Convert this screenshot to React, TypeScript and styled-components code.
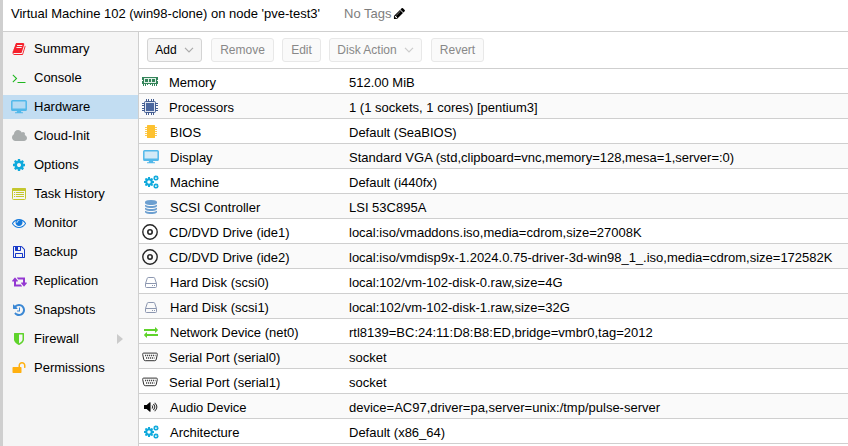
import React from "react";
import styled, { createGlobalStyle } from "styled-components";

const GlobalStyle = createGlobalStyle`
  * { box-sizing: border-box; }
  html, body { margin: 0; padding: 0; overflow: hidden; }
  body {
    background: #fff;
    color: #000;
    font-family: "Liberation Sans", Arial, Helvetica, sans-serif;
    font-size: 13px;
  }
`;

const Window = styled.div`
  display: flex;
  flex-direction: column;
  width: 848px;
  height: 446px;
  overflow: hidden;
  background: #fff;
  border-left: 3px solid #cfcfcf;
  white-space: nowrap;
`;

const Header = styled.header`
  display: flex;
  align-items: center;
  flex: none;
  height: 32px;
  padding: 0 0 4px 8px;
  border-bottom: 1px solid #cfcfcf;
`;

const Title = styled.span`
  width: 333px;
`;

const Tags = styled.span`
  display: flex;
  align-items: center;
  gap: 2px;
  color: #7d7d7d;
`;

const Body = styled.div`
  display: flex;
  flex: 1;
  min-height: 0;
`;

const Sidebar = styled.nav`
  display: flex;
  flex-direction: column;
  flex: none;
  gap: 5px;
  width: 136px;
  padding-top: 5px;
  background: #f5f5f5;
  border-right: 1px solid #cfcfcf;
`;

const NavItem = styled.div<{ $active?: boolean }>`
  display: flex;
  align-items: center;
  flex: none;
  height: 24px;
  margin-top: 0;
  padding: 0 15px 1px 6px;
  background: ${(p) => (p.$active ? "#c2ddf2" : "transparent")};
`;

const NavIcon = styled.span`
  display: flex;
  justify-content: center;
  width: 20px;
  margin-right: 5px;
  padding-top: 1px;
`;

const NavText = styled.span`
  flex: 1;
`;

const Content = styled.main`
  display: flex;
  flex-direction: column;
  flex: 1;
  min-width: 0;
`;

const Toolbar = styled.div`
  display: flex;
  flex: none;
  height: 37px;
  padding: 6px 8px;
  border-bottom: 1px solid #cfcfcf;
`;

const Button = styled.button<{ $width: number; $gap: number; $off?: boolean }>`
  display: flex;
  align-items: center;
  justify-content: center;
  flex: none;
  gap: 7px;
  width: ${(p) => p.$width}px;
  height: 24px;
  margin: 0 ${(p) => p.$gap}px 0 0;
  padding: 0;
  font-family: inherit;
  font-size: 12px;
  color: ${(p) => (p.$off ? "#888" : "#000")};
  background: ${(p) => (p.$off ? "#fafafa" : "#f5f5f5")};
  border: 1px solid ${(p) => (p.$off ? "#e8e8e8" : "#d4d4d4")};
  border-radius: 3px;
`;

const Grid = styled.div`
  display: flex;
  flex-direction: column;
`;

const Row = styled.div`
  display: flex;
  align-items: center;
  flex: none;
  height: 25px;
  padding-top: 2px;
  border-bottom: 1px solid #cfcfcf;
  &:nth-child(even) { background: #fafafa; }
`;

const RowIcon = styled.span<{ $wide?: boolean }>`
  display: flex;
  justify-content: center;
  width: 24px;
  padding-right: ${(p) => (p.$wide ? 2 : 0)}px;
`;

const Label = styled.span<{ $wide?: boolean }>`
  width: 186px;
  padding-left: ${(p) => (p.$wide ? 6 : 7)}px;
`;

const Value = styled.span`
  flex: 1;
`;

const paths = {
  book: "M1703 478q40 57 18 129l-275 906q-19 64-76.500 107.500t-122.500 43.500h-923q-77 0-148.500-53.500t-99.500-131.500q-24-67-2-127 0-4 3-27t4-37q1-8-3-21.500t-3-19.500q2-11 8-21t16.500-23.500 16.500-23.500q23-38 45-91.500t30-91.500q3-10 .5-30t-.5-28q3-11 17-28t17-23q21-36 42-92t25-90q1-9-2.500-32t.5-28q4-13 22-30.500t22-22.500q19-26 42.500-84.500t27.500-96.500q1-8-3-25.500t-2-26.500q2-8 9-18t18-23 17-21q8-12 16.500-30.500t15-35 16-36 19.500-32 26.500-23.500 36-11.500 47.500 5.500l-1 3q38-9 51-9h761q74 0 114 56t18 130l-274 906q-36 119-71.500 153.500t-128.500 34.500h-869q-27 0-38 15-11 16-1 43 24 70 144 70h923q29 0 56-15.500t35-41.500l300-987q7-22 5-57 38 15 59 43zm-1064 2q-4 13 2 22.500t20 9.500h608q13 0 25.500-9.500t16.500-22.500l21-64q4-13-2-22.500t-20-9.500h-608q-13 0-25.500 9.500t-16.500 22.500zm-83 256q-4 13 2 22.500t20 9.500h608q13 0 25.500-9.500t16.500-22.500l21-64q4-13-2-22.500t-20-9.500h-608q-13 0-25.500 9.500t-16.500 22.500z",
  terminal: "M649 983l-466 466q-10 10-23 10t-23-10l-50-50q-10-10-10-23t10-23l393-393-393-393q-10-10-10-23t10-23l50-50q10-10 23-10t23 10l466 466q10 10 10 23t-10 23zm1079 457v64q0 14-9 23t-23 9h-960q-14 0-23-9t-9-23v-64q0-14 9-23t23-9h960q14 0 23 9t9 23z",
  cloud: "M1984 1152q0 159-112.500 271.500t-271.500 112.500h-1088q-185 0-316.500-131.500t-131.500-316.500q0-132 71-241.500t187-163.500q-2-28-2-43 0-212 150-362t362-150q158 0 286.500 88t187.500 230q70-62 166-62 106 0 181 75t75 181q0 75-41 138 129 30 213 134.500t84 239.500z",
  gear: "M1152 896q0-106-75-181t-181-75-181 75-75 181 75 181 181 75 181-75 75-181zm512-109v222q0 12-8 23t-20 13l-185 28q-19 54-39 91 35 50 107 138 10 12 10 25t-9 23q-27 37-99 108t-94 71q-12 0-26-9l-138-108q-44 23-91 38-16 136-29 186-7 28-36 28h-222q-14 0-24.500-8.500t-11.500-21.500l-28-184q-49-16-90-37l-141 107q-10 9-25 9-14 0-25-11-126-114-165-168-7-10-7-23 0-12 8-23 15-21 51-66.500t54-70.500q-27-50-41-99l-183-27q-13-2-21-12.500t-8-23.500v-222q0-12 8-23t19-13l186-28q14-46 39-92-40-57-107-138-10-12-10-24 0-10 9-23 26-36 98.500-107.500t94.500-71.500q13 0 26 10l138 107q44-23 91-38 16-136 29-186 7-28 36-28h222q14 0 24.500 8.500t11.500 21.500l28 184q49 16 90 37l142-107q9-9 24-9 13 0 25 10 129 119 165 170 7 8 7 22 0 12-8 23-15 21-51 66.500t-54 70.500q26 50 41 98l183 28q13 2 21 12.500t8 23.500z",
  eye: "M1664 960q-152-236-381-353 61 104 61 225 0 185-131.500 316.500t-316.500 131.500-316.500-131.500-131.500-316.500q0-121 61-225-229 117-381 353 133 205 333.500 326.500t434.500 121.500 434.500-121.500 333.500-326.500zm-720-384q0-20-14-34t-34-14q-125 0-214.500 89.500t-89.500 214.500q0 20 14 34t34 14 34-14 14-34q0-86 61-147t147-61q20 0 34-14t14-34zm848 384q0 34-20 69-140 230-376.500 368.500t-499.500 138.500-499.500-139-376.500-368q-20-35-20-69t20-69q140-229 376.500-368t499.500-139 499.500 139 376.500 368q20 35 20 69z",
  floppy: "M512 1536h768v-384h-768v384zm896 0h128v-896q0-14-10-38.500t-20-34.500l-281-281q-10-10-34-20t-39-10v416q0 40-28 68t-68 28h-576q-40 0-68-28t-28-68v-416h-128v1280h128v-416q0-40 28-68t68-28h832q40 0 68 28t28 68v416zm-384-928v-320q0-13-9.500-22.500t-22.500-9.500h-192q-13 0-22.500 9.500t-9.500 22.500v320q0 13 9.500 22.500t22.500 9.500h192q13 0 22.500-9.500t9.500-22.500zm640 32v928q0 40-28 68t-68 28h-1344q-40 0-68-28t-28-68v-1344q0-40 28-68t68-28h928q40 0 88 20t76 48l280 280q28 28 48 76t20 88z",
  retweet: "M1216 1568q0 13-9.500 22.500t-22.500 9.500h-960q-8 0-13.500-2t-9-7-5.500-8-3-11.500-1-11.500v-600h-192q-26 0-45-19t-19-45q0-24 15-41l320-384q19-22 49-22t49 22l320 384q15 17 15 41 0 26-19 45t-45 19h-192v384h576q16 0 25 11l160 192q7 10 7 21zm640-416q0 24-15 41l-320 384q-20 23-49 23t-49-23l-320-384q-15-17-15-41 0-26 19-45t45-19h192v-384h-576q-16 0-25-12l-160-192q-7-9-7-20 0-13 9.500-22.500t22.500-9.500h960q8 0 13.500 2t9 7 5.500 8 3 11.500 1 11.500v600h192q26 0 45 19t19 45z",
  history: "M1664 896q0 156-61 298t-164 245-245 164-298 61q-172 0-327-72.500t-264-204.500q-7-10-6.500-22.500t8.500-20.500l137-138q10-9 25-9 16 2 23 12 73 95 179 147t225 52q104 0 198.500-40.500t163.500-109.500 109.500-163.500 40.500-198.500-40.500-198.500-109.500-163.500-163.500-109.500-198.500-40.500q-98 0-188 35.500t-160 101.500l137 138q31 30 14 69-17 40-59 40h-448q-26 0-45-19t-19-45v-448q0-42 40-59 39-17 69 14l130 129q107-101 244.500-156.500t284.500-55.500q156 0 298 61t245 164 164 245 61 298zm-640-288v448q0 14-9 23t-23 9h-320q-14 0-23-9t-9-23v-64q0-14 9-23t23-9h224v-352q0-14 9-23t23-9h64q14 0 23 9t9 23z",
  shield: "M1344 960v-640h-448v1137q119-63 213-137 235-184 235-360zm192-768v768q0 86-33.500 170.500t-83 150-118 127.500-126.500 103-121 77.500-89.500 49.500-42.500 20q-12 6-26 6t-26-6q-16-7-42.500-20t-89.500-49.500-121-77.500-126.500-103-118-127.500-83-150-33.500-170.500v-768q0-26 19-45t45-19h1152q26 0 45 19t19 45z",
  unlock: "M1728 576v256q0 26-19 45t-45 19h-64q-26 0-45-19t-19-45v-256q0-106-75-181t-181-75-181 75-75 181v192h96q40 0 68 28t28 68v576q0 40-28 68t-68 28h-960q-40 0-68-28t-28-68v-576q0-40 28-68t68-28h672v-192q0-185 131.500-316.500t316.500-131.500 316.500 131.500 131.500 316.500z",
  database: "M896 768q237 0 443-43t325-127v170q0 69-103 128t-280 93.500-385 34.500-385-34.500-280-93.500-103-128v-170q119 84 325 127t443 43zm0 768q237 0 443-43t325-127v170q0 69-103 128t-280 93.500-385 34.500-385-34.500-280-93.500-103-128v-170q119 84 325 127t443 43zm0-384q237 0 443-43t325-127v170q0 69-103 128t-280 93.500-385 34.500-385-34.500-280-93.500-103-128v-170q119 84 325 127t443 43zm0-1152q208 0 385 34.500t280 93.500 103 128v128q0 69-103 128t-280 93.500-385 34.500-385-34.500-280-93.500-103-128v-128q0-69 103-128t280-93.500 385-34.500z",
  exchange: "M1792 1184v192q0 13-9.500 22.500t-22.500 9.500h-1376v192q0 13-9.500 22.500t-22.500 9.500q-12 0-24-10l-319-320q-9-9-9-22 0-14 9-23l320-320q9-9 23-9 13 0 22.500 9.500t9.500 22.500v192h1376q13 0 22.500 9.500t9.500 22.500zm0-544q0 14-9 23l-320 320q-9 9-23 9-13 0-22.500-9.500t-9.500-22.500v-192h-1376q-13 0-22.500-9.500t-9.500-22.500v-192q0-13 9.500-22.500t22.500-9.500h1376v-192q0-14 9-23t23-9q12 0 24 10l319 319q9 9 9 23z",
  pencil: "M491 1536l91-91-235-235-91 91v107h128v128h107zm523-928q0-22-22-22-10 0-17 7l-542 542q-7 7-7 17 0 22 22 22 10 0 17-7l542-542q7-7 7-17zm-54-192l416 416-832 832h-416v-416zm683 96q0 53-37 90l-166 166-416-416 166-165q36-38 90-38 53 0 91 38l235 234q37 39 37 91z",
};

type Glyph = { name: keyof typeof paths; color: string; box?: string; w?: number; h?: number };

const Icon = ({ name, color, box = "0 0 1792 1792", w = 14, h = 14 }: Glyph) => (
  <svg width={w} height={h} viewBox={box} fill={color}>
    <path d={paths[name]} />
  </svg>
);

const Desktop = () => (
  <svg width="16" height="14" viewBox="0 0 16 14">
    <rect x=".8" y=".8" width="14.400" height="9.400" rx=".8" fill="#a5d8f3" fillOpacity=".45" stroke="#52b8ea" strokeWidth="1.500" />
    <path d="M1 8.600h14v1.800H1zM6 11h4l.4 1.200H12V13.300H4v-1.100h1.600z" fill="#52b8ea" />
  </svg>
);

const ListIcon = () => (
  <svg width="14" height="12" viewBox="0 0 14 12">
    <rect x=".5" y=".5" width="13" height="11" rx="1" fill="none" stroke="#c4c72e" />
    <rect x="0" y="0" width="14" height="3" rx="1" fill="#c4c72e" />
    <path d="M2 4.500h1.200M4 4.500h8M2 6.500h1.200M4 6.500h8M2 8.500h1.200M4 8.500h8" stroke="#c4c72e" />
  </svg>
);

const Cogs = () => (
  <svg width="15" height="16" viewBox="0 0 1920 1920" fill="#0fa9dc" fillRule="evenodd">
    <path d={paths.gear} transform="translate(-107 213) scale(.833)" />
    <path d={paths.gear} transform="translate(1116 48) scale(.46)" />
    <path d={paths.gear} transform="translate(1116 1072) scale(.46)" />
  </svg>
);

const Memory = () => (
  <svg width="16" height="10" viewBox="0 0 16 10" shapeRendering="crispEdges">
    <path d="M0 0h16v3h-1v1h1v3H0V4h1V3H0z" fill="#34845a" />
    <path d="M2 1h12v5H2z" fill="#e2f1e8" />
    <path d="M3 2h3v3H3zM7 2h2v3H7zM10 2h3v3h-3z" fill="#34845a" />
    <path d="M1 7h1v2H1zM3 7h1v2H3zM5 7h1v1H5zM8 7h1v1H8zM10 7h1v2h-1zM12 7h1v2h-1zM14 7h1v2h-1z" fill="#34845a" />
  </svg>
);

const Cpu = () => (
  <svg width="16" height="16" viewBox="0 0 16 16">
    <path d="M4.500 0v16M6.500 0v16M9.500 0v16M11.500 0v16M0 4.500h16M0 6.500h16M0 9.500h16M0 11.500h16" stroke="#435d91" />
    <rect x="2.500" y="2.500" width="11" height="11" rx="1" fill="#dfe5f0" stroke="#435d91" />
    <rect x="4" y="4" width="8" height="8" fill="#4b679e" />
  </svg>
);

const Bios = () => (
  <svg width="12" height="14" viewBox="0 0 12 14">
    <path d="M0 2.500h12M0 4.500h12M0 6.500h12M0 8.500h12M0 10.500h12" stroke="#fbcb55" />
    <rect x="2" y="0" width="8" height="13" rx=".5" fill="#fdc12f" />
  </svg>
);

const Disc = () => (
  <svg width="16" height="16" viewBox="0 0 16 16" fill="none" stroke="#262626">
    <circle cx="8" cy="8" r="7.200" strokeWidth="1.400" />
    <circle cx="8" cy="8" r="2.200" strokeWidth="1.600" />
  </svg>
);

const Hdd = () => (
  <svg width="12" height="12" viewBox="0 -1 12 12" fill="none" stroke="#8c97b0">
    <path d="M.5 6.500L2.300 1.200Q2.500.5 3.200.5h5.600q.7 0 .9.700l1.800 5.300v3q0 1-1 1h-9q-1 0-1-1zM.5 6.500h11M7 8.500h1M9 8.500h1" />
  </svg>
);

const Serial = () => (
  <svg width="16" height="10" viewBox="0 -.5 16 10">
    <path d="M1.700.6h12.600q1.200 0 1 1.300l-1 4.800q-.3 1.500-1.600 1.500H3.300q-1.300 0-1.600-1.500l-1-4.800Q.5.6 1.700.6z" fill="#fff" stroke="#333" />
    <path d="M3 3h10.500M4 5.500h8.500" stroke="#444" strokeWidth="1.300" strokeDasharray="1.200 .8" />
  </svg>
);

const Speaker = () => (
  <svg width="14" height="10" viewBox="0 0 15 12" preserveAspectRatio="none">
    <path d="M0 4q0-.5.500-.5h2.300L6.200.3Q7 0 7 .7v10.600q0 .7-.8.4L2.800 8.500H.5Q0 8.500 0 8z" fill="#000" />
    <path d="M8.500 4.200q1.600 1.800 0 3.600M10 2.600q3.200 3.400 0 6.800M11.400.9q4.800 5.100 0 10.200" fill="none" stroke="#333" strokeWidth="1.100" />
  </svg>
);

const Chevron = ({ color }: { color: string }) => (
  <svg width="10" height="6" viewBox="0 0 10 6" fill="none" stroke={color} strokeWidth="1.200">
    <path d="M1 .8l4 4 4-4" />
  </svg>
);

const nav: { text: string; icon: React.ReactNode; active?: boolean; more?: boolean }[] = [
  { text: "Summary", icon: <Icon name="book" color="#f5222d" /> },
  { text: "Console", icon: <Icon name="terminal" color="#1fb71f" /> },
  { text: "Hardware", icon: <Desktop />, active: true },
  { text: "Cloud-Init", icon: <Icon name="cloud" color="#a9adad" box="64 0 1920 1792" w={15} /> },
  { text: "Options", icon: <Icon name="gear" color="#0fa9dc" /> },
  { text: "Task History", icon: <ListIcon /> },
  { text: "Monitor", icon: <Icon name="eye" color="#1479dc" /> },
  { text: "Backup", icon: <Icon name="floppy" color="#1739c8" /> },
  { text: "Replication", icon: <Icon name="retweet" color="#9438d2" box="-64 0 1920 1792" w={15} /> },
  { text: "Snapshots", icon: <Icon name="history" color="#3a87d4" /> },
  { text: "Firewall", icon: <Icon name="shield" color="#5fd32b" />, more: true },
  { text: "Permissions", icon: <Icon name="unlock" color="#ffb010" /> },
];

const hardware: { label: string; value: string; icon: React.ReactNode; wide?: boolean }[] = [
  { label: "Memory", value: "512.00 MiB", icon: <Memory />, wide: true },
  { label: "Processors", value: "1 (1 sockets, 1 cores) [pentium3]", icon: <Cpu />, wide: true },
  { label: "BIOS", value: "Default (SeaBIOS)", icon: <Bios /> },
  { label: "Display", value: "Standard VGA (std,clipboard=vnc,memory=128,mesa=1,server=:0)", icon: <Desktop /> },
  { label: "Machine", value: "Default (i440fx)", icon: <Cogs /> },
  { label: "SCSI Controller", value: "LSI 53C895A", icon: <Icon name="database" color="#6c9fd0" /> },
  { label: "CD/DVD Drive (ide1)", value: "local:iso/vmaddons.iso,media=cdrom,size=27008K", icon: <Disc />, wide: true },
  { label: "CD/DVD Drive (ide2)", value: "local:iso/vmdisp9x-1.2024.0.75-driver-3d-win98_1_.iso,media=cdrom,size=172582K", icon: <Disc />, wide: true },
  { label: "Hard Disk (scsi0)", value: "local:102/vm-102-disk-0.raw,size=4G", icon: <Hdd /> },
  { label: "Hard Disk (scsi1)", value: "local:102/vm-102-disk-1.raw,size=32G", icon: <Hdd /> },
  { label: "Network Device (net0)", value: "rtl8139=BC:24:11:D8:B8:ED,bridge=vmbr0,tag=2012", icon: <Icon name="exchange" color="#5fd32b" /> },
  { label: "Serial Port (serial0)", value: "socket", icon: <Serial />, wide: true },
  { label: "Serial Port (serial1)", value: "socket", icon: <Serial />, wide: true },
  { label: "Audio Device", value: "device=AC97,driver=pa,server=unix:/tmp/pulse-server", icon: <Speaker /> },
  { label: "Architecture", value: "Default (x86_64)", icon: <Cogs /> },
];

export default function App() {
  return (
    <>
      <GlobalStyle />
      <Window>
        <Header>
          <Title>Virtual Machine 102 (win98-clone) on node 'pve-test3'</Title>
          <Tags>
            No Tags
            <Icon name="pencil" color="#000" w={13} h={13} />
          </Tags>
        </Header>
        <Body>
          <Sidebar>
            {nav.map((n) => (
              <NavItem key={n.text} $active={n.active}>
                <NavIcon>{n.icon}</NavIcon>
                <NavText>{n.text}</NavText>
                {n.more && (
                  <svg width="6" height="10" viewBox="0 0 6 10" fill="#cbcbcb">
                    <path d="M0 0l6 5-6 5z" />
                  </svg>
                )}
              </NavItem>
            ))}
          </Sidebar>
          <Content>
            <Toolbar>
              <Button $width={55} $gap={9}>
                Add
                <Chevron color="#aaa" />
              </Button>
              <Button $width={63} $gap={8} $off>Remove</Button>
              <Button $width={39} $gap={8} $off>Edit</Button>
              <Button $width={93} $gap={9} $off>
                Disk Action
                <Chevron color="#ccc" />
              </Button>
              <Button $width={53} $gap={0} $off>Revert</Button>
            </Toolbar>
            <Grid>
              {hardware.map((h) => (
                <Row key={h.label}>
                  <RowIcon $wide={h.wide}>{h.icon}</RowIcon>
                  <Label $wide={h.wide}>{h.label}</Label>
                  <Value>{h.value}</Value>
                </Row>
              ))}
            </Grid>
          </Content>
        </Body>
      </Window>
    </>
  );
}
